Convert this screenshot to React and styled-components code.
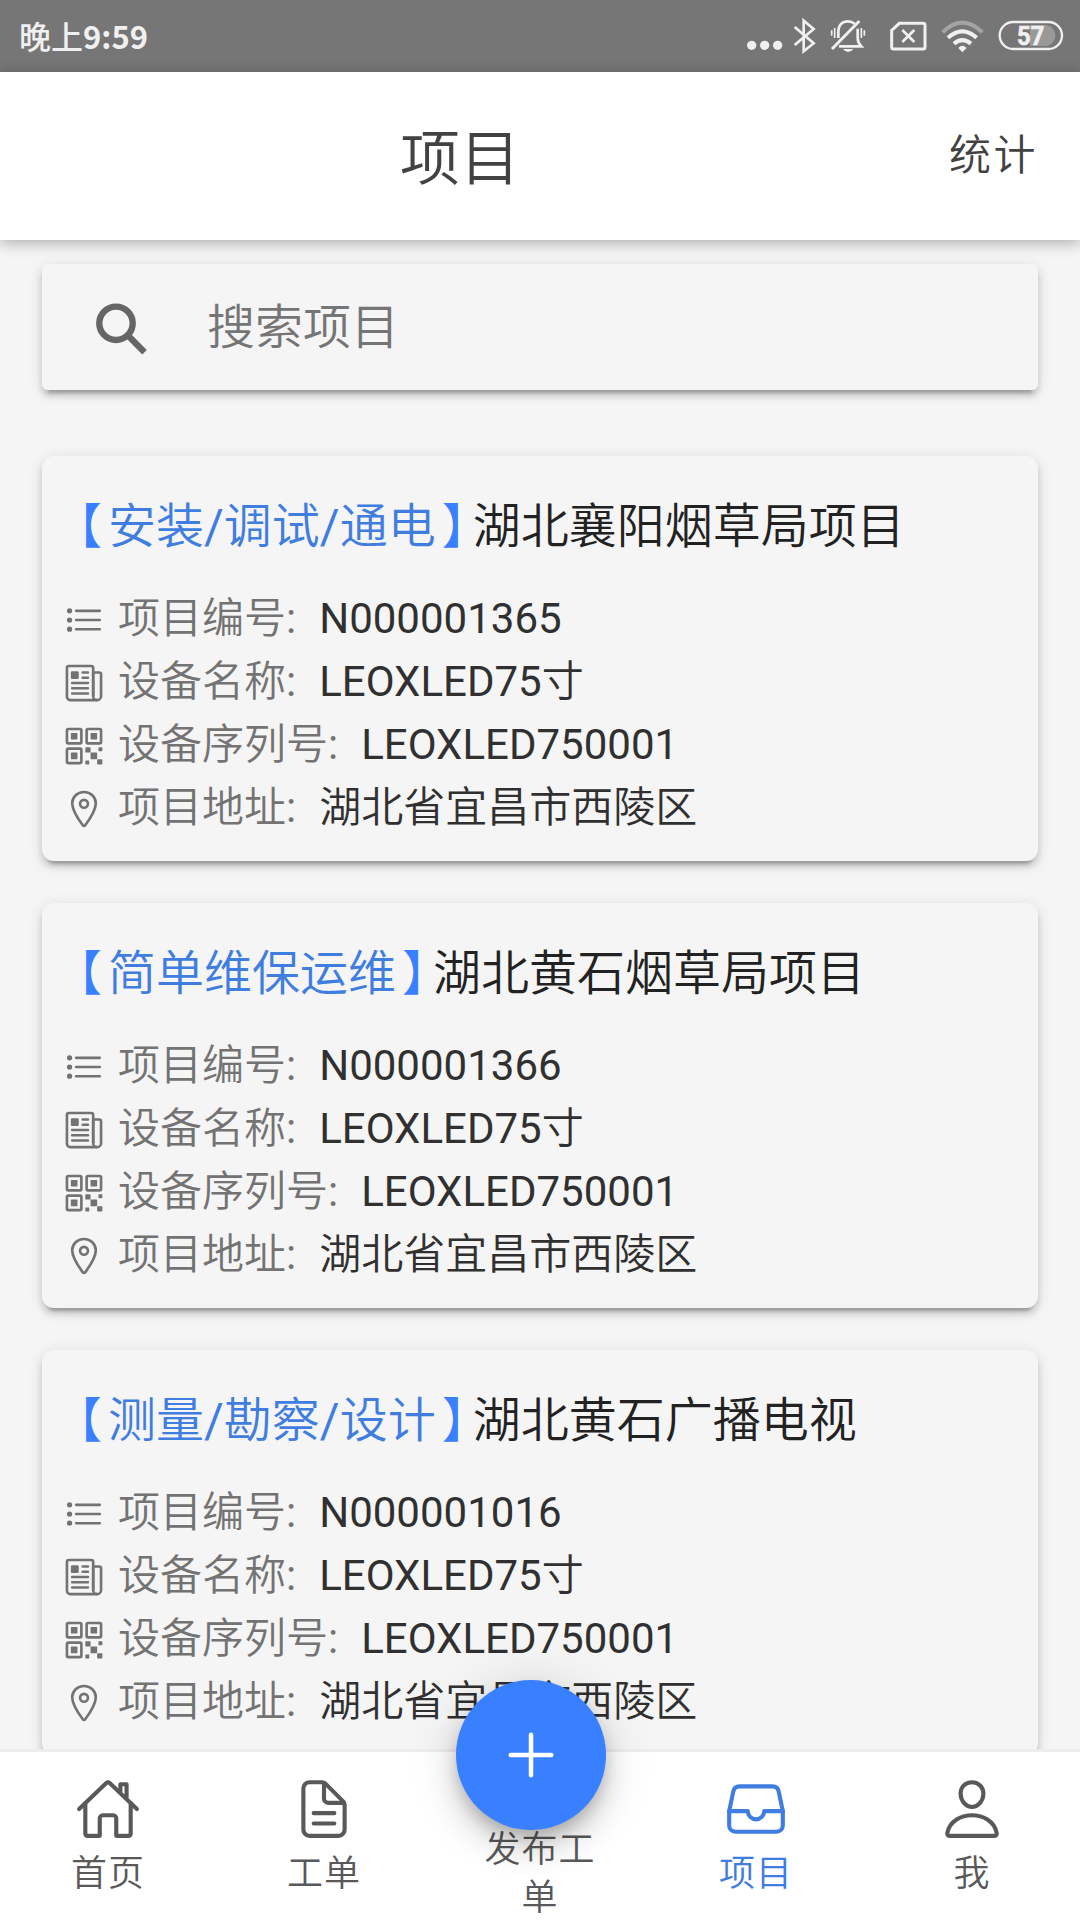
import React from 'react';
import styled, { createGlobalStyle } from 'styled-components';
import {
  IoAdd,
  IoDocumentTextOutline,
  IoFileTrayOutline,
  IoHomeOutline,
  IoListOutline,
  IoLocationOutline,
  IoNewspaperOutline,
  IoPersonOutline,
  IoQrCodeOutline,
} from 'react-icons/io5';

const GlobalStyle = createGlobalStyle`
  * {
    box-sizing: border-box;
  }

  body {
    margin: 0;
    overflow: hidden;
    background: #f5f5f5;
    font-family: Roboto, 'Noto Sans CJK SC', sans-serif;
    font-weight: 400;
  }
`;

const Screen = styled.div`
  display: flex;
  flex-direction: column;
  width: 1080px;
  height: 1920px;
  overflow: hidden;
  background: #f5f5f5;
`;

const StatusBar = styled.div`
  display: flex;
  flex: none;
  align-items: center;
  justify-content: space-between;
  height: 72px;
  padding: 0 16px 0 19px;
  background: #767676;
  color: #f0f0f0;
`;

const Clock = styled.span`
  padding-bottom: 2px;
  font-family: 'Noto Sans CJK SC', sans-serif;
  font-size: 32px;
  font-weight: 500;
  line-height: 70px;

  b {
    font-size: 31px;
    font-weight: 700;
  }
`;

const StatusIcons = styled.div`
  display: flex;
  align-items: center;

  svg {
    display: block;
    height: 34px;
    overflow: visible;
  }
`;

const Header = styled.header`
  display: flex;
  flex: none;
  align-items: center;
  height: 168px;
  background: #fff;
  color: #424242;
  box-shadow: 0 3px 14px rgba(0, 0, 0, 0.3);
  z-index: 1;
`;

const HeaderTitle = styled.h1`
  flex: 1;
  margin: 0;
  padding: 8px 0 0 5px;
  font-size: 60px;
  font-weight: 350;
  line-height: 72px;
  text-align: center;
`;

const HeaderAction = styled.button`
  width: 165px;
  padding: 0 0 0 34px;
  border: 0;
  background: none;
  color: inherit;
  font: inherit;
  font-size: 42px;
  font-weight: 350;
  line-height: 60px;
  letter-spacing: 2.5px;
  text-align: left;
`;

const Content = styled.main`
  flex: 1;
  min-height: 0;
  padding: 24px 42px 0;
  overflow: hidden;
`;

const Panel = styled.section`
  background: #f5f5f5;
  border-radius: 12px;
  box-shadow: 0 9px 3px -6px rgba(0, 0, 0, 0.2), 0 6px 6px rgba(0, 0, 0, 0.14),
    0 3px 15px rgba(0, 0, 0, 0.12);
`;

const SearchBar = styled(Panel)`
  display: flex;
  align-items: center;
  height: 126px;
  margin-bottom: 66px;
  padding-left: 45px;
  border-radius: 6px;
  color: #666;

  svg {
    margin-top: 6px;
  }
`;

const SearchInput = styled.input`
  flex: 1;
  margin-left: 49px;
  padding: 0;
  border: 0;
  outline: 0;
  background: none;
  font: inherit;
  font-size: 48px;
  font-weight: 350;

  &::placeholder {
    color: #757575;
    opacity: 1;
  }
`;

const Card = styled(Panel)`
  height: 405px;
  margin-bottom: 42px;
  padding: 35px 21px 0;
`;

const CardTitle = styled.h2`
  margin: 0 0 24px;
  color: #222;
  font-size: 48px;
  font-weight: 350;
  line-height: 72px;
  white-space: nowrap;
`;

const CardType = styled.span`
  color: #3f7de0;
`;

const Bracket = styled.span`
  display: inline-block;
  padding: ${props => (props.$open ? '0 6px 0 15px' : '0 7px 0 6px')};
  color: #3880ff;
  font-feature-settings: 'halt';
`;

const Row = styled.div`
  display: flex;
  align-items: center;
  height: 63px;
  color: #737373;
  font-size: 42px;
  font-weight: 350;
  line-height: 63px;
  white-space: nowrap;

  svg {
    width: 42px;
    height: 42px;
    margin: 2px 13px 0 0;
  }
`;

const Value = styled.span`
  margin-left: 23px;
  color: #303030;
`;

const Latin = styled.span`
  font-weight: 400;
`;

const TabBar = styled.nav`
  display: flex;
  flex: none;
  height: 171px;
  border-top: 3px solid #ededed;
  background: #fff;
`;

const Tab = styled.div`
  position: relative;
  display: flex;
  flex: none;
  flex-direction: column;
  align-items: center;
  width: 216px;
  padding-top: 24px;
  color: ${props => (props.$active ? '#3f7de0' : '#595959')};

  svg {
    display: block;
  }
`;

const TabLabel = styled.span`
  margin-top: 8px;
  font-size: 36px;
  font-weight: 350;
  line-height: 48px;
  letter-spacing: 1px;
`;

const PublishTab = styled(Tab)`
  text-align: center;
`;

const PublishLabel = styled(TabLabel)`
  width: 120px;
  margin-top: 50px;
`;

const PublishButton = styled.button`
  position: absolute;
  top: -72px;
  left: 24px;
  display: flex;
  align-items: center;
  justify-content: center;
  width: 150px;
  height: 150px;
  padding: 0;
  border: 0;
  border-radius: 50%;
  background: #3880ff;
  color: #fff;
  box-shadow: 0 9px 15px -3px rgba(0, 0, 0, 0.2), 0 18px 30px rgba(0, 0, 0, 0.14),
    0 3px 54px rgba(0, 0, 0, 0.12);
`;

const projects = [
  { types: ['安装', '调试', '通电'], name: '湖北襄阳烟草局项目', number: 'N000001365' },
  { types: ['简单维保运维'], name: '湖北黄石烟草局项目', number: 'N000001366' },
  { types: ['测量', '勘察', '设计'], name: '湖北黄石广播电视', number: 'N000001016' },
];

const SystemIcons = () => (
  <StatusIcons>
    <svg width="41.3" viewBox="80 57 124 102" fill="#f0f0f0">
      <circle cx="94" cy="136" r="14" />
      <circle cx="133" cy="136" r="14" />
      <circle cx="172" cy="136" r="14" />
    </svg>
    <svg width="35" viewBox="204 57 105 102" fill="none" stroke="#f0f0f0" strokeWidth="8">
      <path d="M224 81 L281 130 L251 154 V62 L281 87 L224 135" />
    </svg>
    <svg width="54.7" viewBox="309 57 164 102" fill="none" stroke="#f0f0f0" strokeWidth="8">
      <path d="M355 114 V96 C355 76 366 64 384 64 C392 64 399 67 404 71" />
      <path d="M413 86 V115 C413 124 418 133 424 139 H357" />
      <path d="M336 147 L418 63" strokeWidth="9" />
      <path d="M335 91 V107 M344 84 V114 M424 84 V114 M433 91 V107" strokeWidth="5" />
      <path d="M369 147 H400 Q394 156 384 156 Q375 156 369 147 Z" fill="#f0f0f0" stroke="none" />
    </svg>
    <svg width="56" viewBox="473 57 168 102" fill="none" stroke="#f0f0f0" strokeWidth="9">
      <path d="M537 70 H608 Q614 70 614 76 V141 Q614 147 608 147 H520 Q514 147 514 141 V91 Z" />
      <path d="M546 90 L582 126 M582 90 L546 126" strokeWidth="8" />
    </svg>
    <svg width="57.3" viewBox="641 57 172 102" fill="none" stroke="#f0f0f0" strokeWidth="12">
      <path d="M667 97 Q726 39 786 97" stroke="#a3a3a3" />
      <path d="M683 113 Q726 75 769 113" />
      <path d="M701 131 Q726 110 752 131" />
      <path d="M714 144 Q726 131 739 144 L726 157 Z" fill="#f0f0f0" stroke="none" />
    </svg>
    <svg width="72.7" viewBox="813 57 218 102">
      <path d="M930 75 H980 A32 32 0 0 1 980 138 H930 Z" fill="#999" />
      <rect x="839" y="66" width="187" height="81" rx="40.5" fill="none" stroke="#f0f0f0" strokeWidth="7" />
      <text
        x="891"
        y="134"
        fill="#f0f0f0"
        stroke="#f0f0f0"
        strokeWidth="2"
        fontFamily="Roboto, sans-serif"
        fontSize="78"
        fontWeight="700"
        textLength="82"
        lengthAdjust="spacingAndGlyphs"
      >
        57
      </text>
    </svg>
  </StatusIcons>
);

const SearchIcon = () => (
  <svg width="71" height="71" viewBox="0 0 71 71" fill="none" stroke="currentColor">
    <circle cx="29" cy="28.3" r="16.7" strokeWidth="6.4" />
    <path d="M39.5 39 L57.5 57.2" strokeWidth="6.4" />
  </svg>
);

const Field = ({ icon: Icon, label, children }) => (
  <Row>
    <Icon />
    {label}
    <Latin>:</Latin>
    <Value>{children}</Value>
  </Row>
);

const ProjectCard = ({ project }) => (
  <Card>
    <CardTitle>
      <CardType>
        <Bracket $open>【</Bracket>
        {project.types.map((type, index) => (
          <React.Fragment key={type}>
            {index > 0 && <Latin>/</Latin>}
            {type}
          </React.Fragment>
        ))}
        <Bracket>】</Bracket>
      </CardType>
      {project.name}
    </CardTitle>
    <Field icon={IoListOutline} label="项目编号">
      <Latin>{project.number}</Latin>
    </Field>
    <Field icon={IoNewspaperOutline} label="设备名称">
      <Latin>LEOXLED75</Latin>寸
    </Field>
    <Field icon={IoQrCodeOutline} label="设备序列号">
      <Latin>LEOXLED750001</Latin>
    </Field>
    <Field icon={IoLocationOutline} label="项目地址">
      湖北省宜昌市西陵区
    </Field>
  </Card>
);

const App = () => {
  return (
    <Screen>
      <GlobalStyle />
      <StatusBar>
        <Clock>
          晚上<b>9:59</b>
        </Clock>
        <SystemIcons />
      </StatusBar>

      <Header>
        <HeaderTitle>项目</HeaderTitle>
        <HeaderAction>统计</HeaderAction>
      </Header>

      <Content>
        <SearchBar>
          <SearchIcon />
          <SearchInput placeholder="搜索项目" />
        </SearchBar>
        {projects.map(project => (
          <ProjectCard key={project.number} project={project} />
        ))}
      </Content>

      <TabBar>
        <Tab>
          <IoHomeOutline size={66} />
          <TabLabel>首页</TabLabel>
        </Tab>
        <Tab>
          <IoDocumentTextOutline size={66} />
          <TabLabel>工单</TabLabel>
        </Tab>
        <PublishTab>
          <PublishLabel>发布工单</PublishLabel>
          <PublishButton aria-label="发布工单">
            <IoAdd size={72} />
          </PublishButton>
        </PublishTab>
        <Tab $active>
          <IoFileTrayOutline size={66} />
          <TabLabel>项目</TabLabel>
        </Tab>
        <Tab>
          <IoPersonOutline size={66} />
          <TabLabel>我</TabLabel>
        </Tab>
      </TabBar>
    </Screen>
  );
};

export default App;
